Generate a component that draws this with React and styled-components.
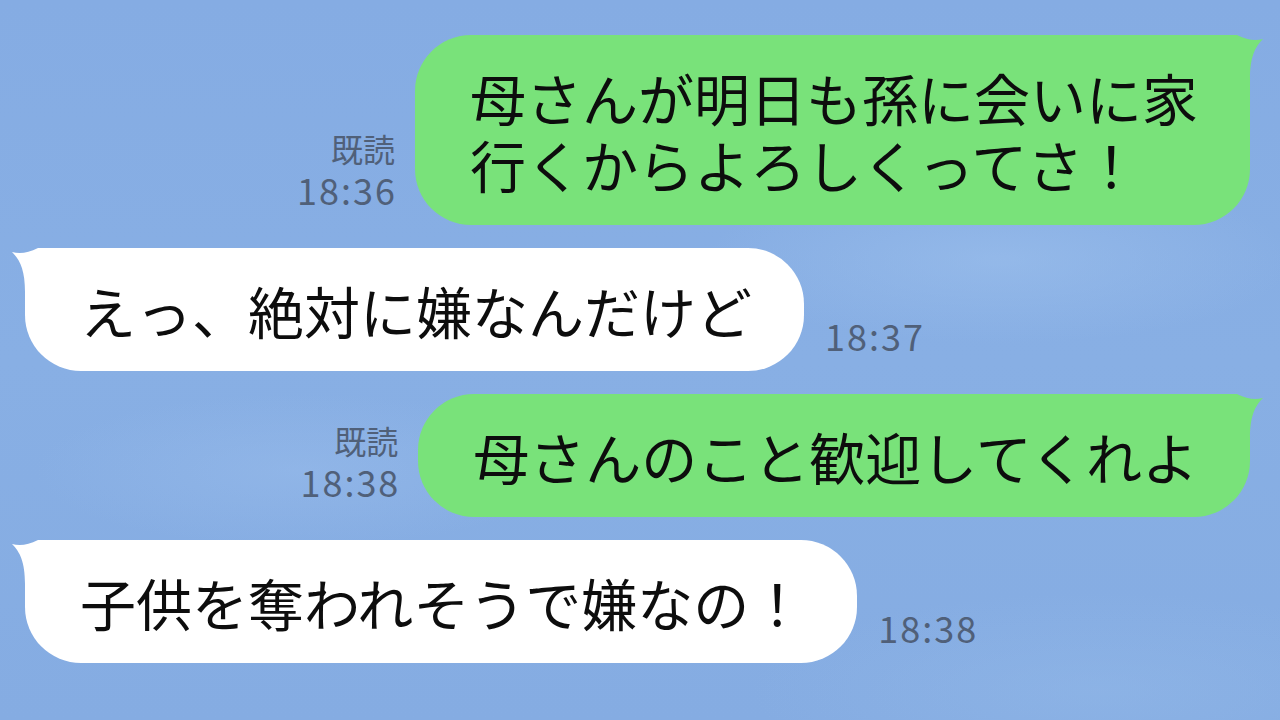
import styled, { createGlobalStyle } from 'styled-components'

const GlobalStyle = createGlobalStyle`
  html, body {
    margin: 0;
    padding: 0;
  }
  body {
    font-family: "Noto Sans CJK JP", "Noto Sans", sans-serif;
  }
`

const Screen = styled.div`
  width: 1280px;
  height: 720px;
  box-sizing: border-box;
  overflow: hidden;
  padding: 35px 30px 0 25px;
  display: flex;
  flex-direction: column;
  gap: 23px;
  background:
    radial-gradient(ellipse 420px 120px at 1000px 260px, rgba(160, 195, 238, 0.5), transparent 70%),
    radial-gradient(ellipse 380px 110px at 300px 470px, rgba(155, 190, 236, 0.45), transparent 70%),
    radial-gradient(ellipse 500px 140px at 1100px 690px, rgba(150, 188, 234, 0.4), transparent 70%),
    linear-gradient(180deg, #85ace3 0%, #88afe4 50%, #85ace2 100%);
`

const Row = styled.div`
  display: flex;
  align-items: flex-end;
  justify-content: ${p => (p.$mine ? 'flex-end' : 'flex-start')};
  gap: ${p => (p.$mine ? '20px' : '21px')};
`

const Bubble = styled.div`
  position: relative;
  background: ${p => (p.$mine ? '#79e27a' : '#ffffff')};
  border-radius: 56px;
  padding: 28px 52px 28px 55px;
  font-size: 56px;
  line-height: 67px;
  color: #0d0d0d;
  white-space: nowrap;
`

const Tail = styled.svg`
  position: absolute;
  top: 0;
  width: 72px;
  height: 60px;
  ${p => (p.$mine ? 'right: -15px;' : 'left: -15px; transform: scaleX(-1);')}
`

const Meta = styled.div`
  display: flex;
  flex-direction: column;
  align-items: flex-end;
  padding-bottom: 16px;
  color: #506079;
`

const ReadMark = styled.span`
  font-size: 32px;
  line-height: 42px;
`

const Time = styled.span`
  font-size: 36px;
  line-height: 40px;
  letter-spacing: 2px;
  margin-right: -2px;
`

const BubbleTail = ({ mine }) => (
  <Tail $mine={mine} viewBox="0 0 72 60">
    <path
      d="M0 0 H44 C54 5 62 6 70 4 C62 12 57 22 57 44 L57 60 H0 Z"
      fill={mine ? '#79e27a' : '#ffffff'}
    />
  </Tail>
)

const messages = [
  { mine: true, time: '18:36', lines: ['母さんが明日も孫に会いに家', '行くからよろしくってさ！'] },
  { mine: false, time: '18:37', lines: ['えっ、絶対に嫌なんだけど'] },
  { mine: true, time: '18:38', lines: ['母さんのこと歓迎してくれよ'] },
  { mine: false, time: '18:38', lines: ['子供を奪われそうで嫌なの！'] }
]

const Message = ({ mine, time, lines }) => {
  const meta = (
    <Meta>
      {mine && <ReadMark>既読</ReadMark>}
      <Time>{time}</Time>
    </Meta>
  )
  return (
    <Row $mine={mine}>
      {mine && meta}
      <Bubble $mine={mine}>
        <BubbleTail mine={mine} />
        {lines.map((line, i) => (
          <div key={i}>{line}</div>
        ))}
      </Bubble>
      {!mine && meta}
    </Row>
  )
}

export default function App() {
  return (
    <>
      <GlobalStyle />
      <Screen>
        {messages.map((m, i) => (
          <Message key={i} {...m} />
        ))}
      </Screen>
    </>
  )
}
